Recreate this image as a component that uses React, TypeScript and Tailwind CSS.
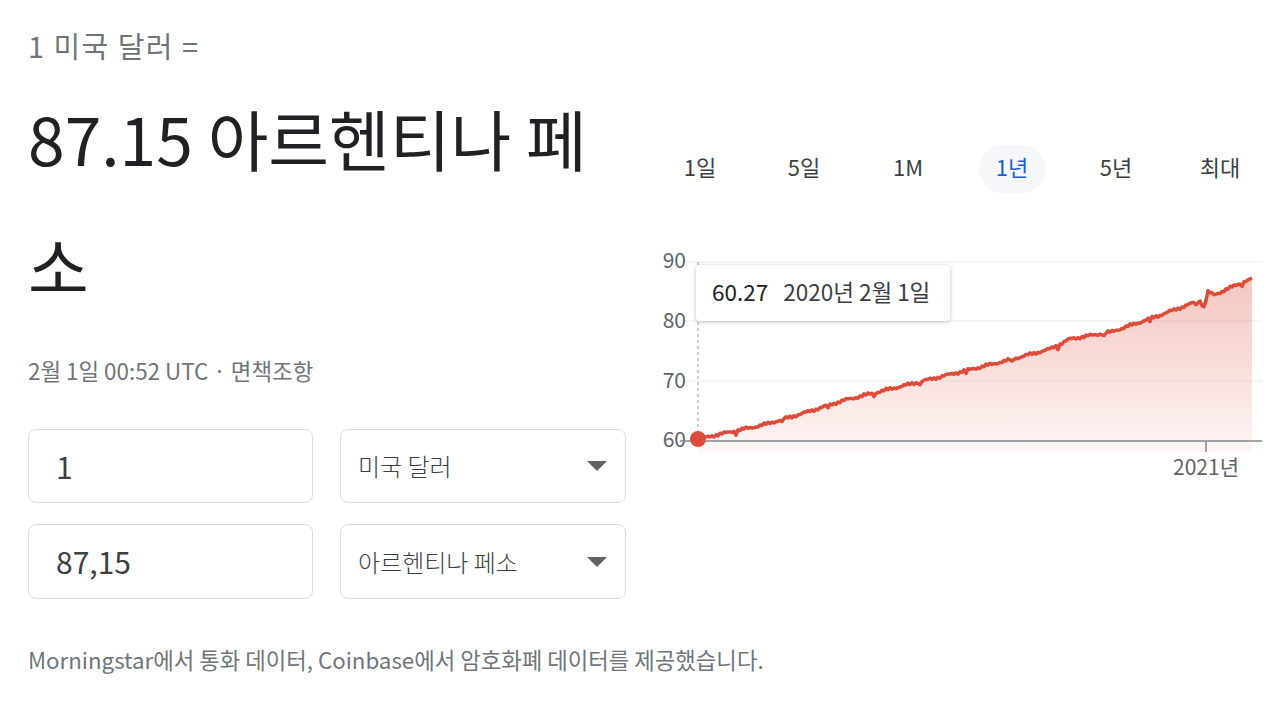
import React from "react";

const font = { fontFamily: '"Noto Sans CJK KR", "Noto Sans", sans-serif' };

const tabs = ["1일", "5일", "1M", "1년", "5년", "최대"];

// rough shape of the 1-year line, page coordinates
const anchors: [number, number][] = [
  [698, 439],
  [730, 432],
  [763, 425],
  [804, 413],
  [845, 400],
  [886, 390],
  [927, 380],
  [968, 370],
  [1009, 360],
  [1050, 349],
  [1070, 339],
  [1111, 332],
  [1152, 318],
  [1193, 303],
  [1200, 301],
  [1204, 307],
  [1208, 292],
  [1214, 295],
  [1252, 278],
];

function yAt(x: number) {
  for (let i = 0; i < anchors.length - 1; i++) {
    const [x0, y0] = anchors[i];
    const [x1, y1] = anchors[i + 1];
    if (x >= x0 && x <= x1) return y0 + ((x - x0) / (x1 - x0)) * (y1 - y0);
  }
  return anchors[anchors.length - 1][1];
}

function buildPoints() {
  const pts: [number, number][] = [];
  for (let x = 698; x <= 1252; x += 2) {
    let y = yAt(x);
    if (x > 700 && x < 1248) {
      y += Math.sin(x * 1.7) * 0.9 + Math.sin(x * 0.31) * 0.8;
      if (x % 46 === 0) y += 3;
    }
    pts.push([x, y]);
  }
  return pts;
}

function Chart() {
  const pts = buildPoints();
  const line = pts.map(([x, y], i) => `${i ? "L" : "M"}${x},${y.toFixed(1)}`).join(" ");
  const area = `${line} L1252,452 L698,452 Z`;
  return (
    <div className="relative w-[622px] h-[250px] mt-[47px]">
      <svg className="absolute inset-0" width="622" height="250" viewBox="640 240 622 250" style={font}>
        <defs>
          <linearGradient id="fill" x1="0" y1="0" x2="0" y2="1">
            <stop offset="0%" stopColor="#dd4b39" stopOpacity="0.32" />
            <stop offset="100%" stopColor="#dd4b39" stopOpacity="0.05" />
          </linearGradient>
        </defs>
        {[262, 321, 381].map((y) => (
          <line key={y} x1="680" x2="1262" y1={y} y2={y} stroke="#f1f3f4" strokeWidth="1.5" />
        ))}
        {[
          ["90", 261],
          ["80", 321],
          ["70", 381],
          ["60", 440],
        ].map(([t, y]) => (
          <text key={t} x="686" y={Number(y) + 7} textAnchor="end" fontSize="21" fill="#5f6368">
            {t}
          </text>
        ))}
        <path d={area} fill="url(#fill)" />
        <line x1="698" x2="698" y1="262" y2="440" stroke="#9aa0a6" strokeWidth="1" strokeDasharray="3 3" />
        <line x1="680" x2="1262" y1="441" y2="441" stroke="#80868b" strokeWidth="1.5" />
        <line x1="1206" x2="1206" y1="441" y2="452" stroke="#80868b" strokeWidth="1.5" />
        <text x="1206" y="475" textAnchor="middle" fontSize="21" fill="#5f6368">
          2021년
        </text>
        <path d={line} fill="none" stroke="#dd4b39" strokeWidth="3.5" strokeLinejoin="round" />
        <circle cx="698" cy="439" r="8" fill="#dd4b39" />
      </svg>
      <div className="absolute left-[56px] top-[25px] w-[254px] h-[56px] bg-white rounded shadow-[0_1px_4px_rgba(0,0,0,0.25)] flex items-center pl-4 pb-[2px] gap-[15px] text-[22.5px] whitespace-nowrap">
        <span className="text-[#202124]">60.27</span>
        <span className="text-[#3c4043]">2020년 2월 1일</span>
      </div>
    </div>
  );
}

function Caret() {
  return (
    <svg width="20" height="10" viewBox="0 0 20 10">
      <path d="M0 0 L20 0 L10 10 Z" fill="#5f6368" />
    </svg>
  );
}

export default function App() {
  return (
    <div className="w-[1280px] h-[704px] bg-white flex pl-7 pt-7 overflow-hidden" style={font}>
      {/* Left column */}
      <div className="w-[598px] flex flex-col">
        <div className="text-[29px] leading-[34px] tracking-[0.05em] text-[#70757a]">1 미국 달러 =</div>
        <div className="mt-[12px] text-[66px] leading-[127px] text-[#202124] w-[598px]">87.15 아르헨티나 페소</div>
        <div className="mt-[28px] text-[22.4px] leading-[28px] text-[#70757a]">2월 1일 00:52 UTC · 면책조항</div>

        <div className="mt-[45px] grid grid-cols-[285px_286px] gap-x-[27px] gap-y-[21px]">
          <div className="h-[74px] rounded-lg border border-[#dadce0] flex items-center pl-[27px] text-[30px] text-[#3c4043]">1</div>
          <div className="h-[74px] rounded-lg border border-[#dadce0] flex items-center justify-between pl-[17px] pr-[18px] text-[24px] text-[#3c4043] font-light">
            <span>미국 달러</span>
            <Caret />
          </div>
          <div className="h-[75px] rounded-lg border border-[#dadce0] flex items-center pl-[27px] text-[30px] text-[#3c4043]">87,15</div>
          <div className="h-[75px] rounded-lg border border-[#dadce0] flex items-center justify-between pl-[17px] pr-[18px] text-[24px] text-[#3c4043] font-light">
            <span>아르헨티나 페소</span>
            <Caret />
          </div>
        </div>

        <div className="mt-[46px] text-[22.3px] leading-[28px] text-[#70757a] whitespace-nowrap">
          Morningstar에서 통화 데이터, Coinbase에서 암호화폐 데이터를 제공했습니다.
        </div>
      </div>

      {/* Right column */}
      <div className="ml-[14px] w-[622px] flex flex-col">
        <div className="mt-[117px] pl-2 grid grid-cols-[repeat(6,104px)] h-[48px]">
          {tabs.map((t) => (
            <div key={t} className="flex items-center justify-center">
              <div
                className={
                  t === "1년"
                    ? "w-[67px] h-[48px] pb-[6px] rounded-full bg-[#f5f7fa] text-[#1a5fd6] flex items-center justify-center text-[22px]"
                    : "w-[67px] h-[48px] pb-[6px] flex items-center justify-center text-[22px] text-[#3c4043]"
                }
              >
                {t}
              </div>
            </div>
          ))}
        </div>
        <Chart />
      </div>
    </div>
  );
}
